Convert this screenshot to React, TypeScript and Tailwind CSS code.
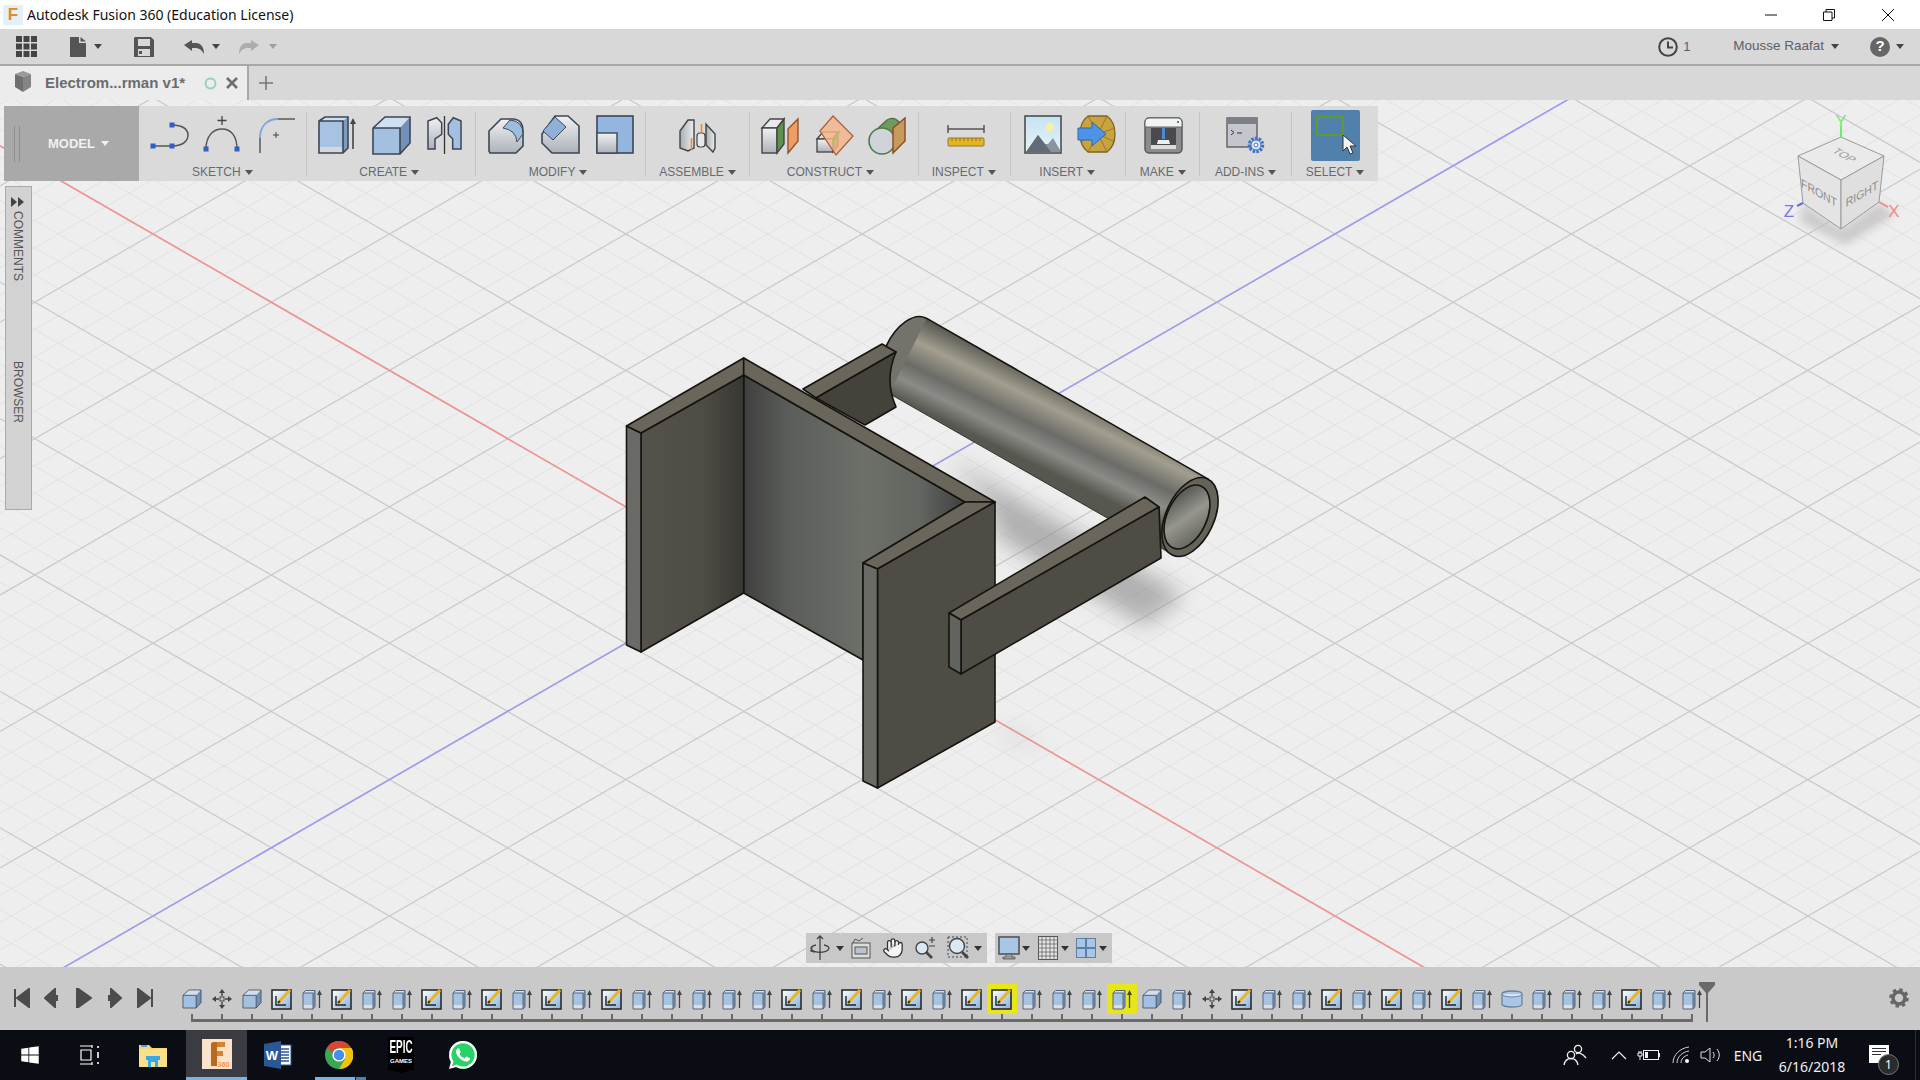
import React from 'react';
import { Hand } from 'lucide-react';
import { FaWindows, FaWhatsapp } from 'react-icons/fa';

// --- small helpers ---
const Caret = ({ color = '#555' }: { color?: string }) => (
  <svg width="8" height="5" viewBox="0 0 8 5" className="shrink-0">
    <polygon points="0,0 8,0 4,5" fill={color} />
  </svg>
);

const Ic = ({ children }: { children: React.ReactNode }) => (
  <svg width="48" height="44" viewBox="0 0 48 44" className="shrink-0">
    {children}
  </svg>
);

const Node = ({ x, y }: { x: number; y: number }) => <rect x={x - 2.5} y={y - 2.5} width="5" height="5" fill="#2f5fc8" />;

const edge = '#3d4654';

// --- ribbon icons ---
const LineIcon = () => (
  <Ic>
    <path d="M9 32H28C40 32 44 26 44 21C44 15 38 11 28 11" fill="none" stroke="#555" strokeWidth="1.5" />
    <Node x={9} y={32} />
    <Node x={28} y={32} />
    <Node x={28} y={11} />
  </Ic>
);
const ArcIcon = () => (
  <Ic>
    <path d="M8 35C8 22 15 15 24 15C33 15 39 22 39 35" fill="none" stroke="#555" strokeWidth="1.5" />
    <path d="M19.5 6.5H28.5M24 2V11" stroke="#444" strokeWidth="1.3" />
    <Node x={8} y={35} />
    <Node x={39} y={35} />
  </Ic>
);
const FilletIcon = () => (
  <Ic>
    <path d="M8 39V24" stroke="#444" strokeWidth="1.3" />
    <path d="M8 24C8 12 15 5 26 5" fill="none" stroke="#7ba6e0" strokeWidth="1.8" />
    <path d="M26 5H43" stroke="#444" strokeWidth="1.3" />
    <path d="M21 21H27M24 18V24" stroke="#444" strokeWidth="1" />
  </Ic>
);
const ExtrudeIcon = () => (
  <Ic>
    <polygon points="6,7 12,3 35,3 30,7" fill="#cfe0f0" />
    <rect x="6" y="7" width="24" height="26" fill="#a7c3e2" />
    <rect x="6" y="33" width="24" height="6" fill="#d5d7da" />
    <polygon points="30,7 35,3 35,34 30,39" fill="#7f9bc0" />
    <path d="M6 7L12 3H35V34L30 39H6Z M6 7H30V39" fill="none" stroke={edge} strokeWidth="1.6" />
    <path d="M40 35V9" stroke="#444" strokeWidth="1.6" />
    <polygon points="40,4 37,10 43,10" fill="#444" />
  </Ic>
);
const BoxFaces = () => (
  <>
    <polygon points="6,14 18,3 43,3 33,14" fill="#cfe0f0" />
    <rect x="6" y="14" width="27" height="26" fill="#a3c0e0" />
    <polygon points="33,14 43,3 43,29 33,40" fill="#7391b8" />
    <path d="M6 14L18 3H43V29L33 40H6Z M6 14H33V40" fill="none" stroke={edge} strokeWidth="1.6" />
  </>
);
const MirrorIcon = () => (
  <Ic>
    <polygon points="7,7 15.7,3.7 20.7,8.7 20.7,20.3 14,25 14,35 7,35" fill="url(#gray-v)" stroke={edge} strokeWidth="1.5" />
    <polygon points="40,7 32.3,3.7 27.3,10.3 27.3,20.3 31.7,25 31.7,35 40,35" fill="#a3c0e0" stroke={edge} strokeWidth="1.5" />
    <path d="M23.5 2V40" stroke="#333" strokeWidth="1.3" />
  </Ic>
);
const PressPullIcon = () => (
  <Ic>
    <path d="M7 17L19 5H32Q41 6 41 17V32L34 39H8L7 37Z" fill="url(#gray-v)" stroke={edge} strokeWidth="1.6" />
    <path d="M21 14L28 6Q41 7 41 20L35 28Q34 16 21 14Z" fill="#9dbde0" stroke={edge} strokeWidth="1" />
  </Ic>
);
const ChamferIcon = () => (
  <Ic>
    <polygon points="6,20 19,2 32,2 43,12 43,39 16,39 6,29" fill="url(#gray-v)" stroke={edge} strokeWidth="1.6" />
    <polygon points="7,17 19,3 30,13 17,26" fill="#8fb0d8" stroke={edge} strokeWidth="1" />
  </Ic>
);
const ShellIcon = () => (
  <Ic>
    <rect x="7" y="2" width="36" height="37" fill="#94b6de" stroke={edge} strokeWidth="1.6" />
    <rect x="7" y="19" width="20" height="20" fill="url(#gray-v)" stroke={edge} strokeWidth="1.4" />
  </Ic>
);
const AssembleIcon = () => (
  <Ic>
    <polygon points="7,17 15,6 21,6 21,34 15,37 7,34" fill="url(#gray-h)" stroke="#444" strokeWidth="1.4" />
    <polygon points="42,20 33,10 33,31 40,38 42,34" fill="url(#gray-h)" stroke="#444" strokeWidth="1.4" />
    <rect x="24" y="19" width="8" height="14" rx="3" fill="#e8e8e8" stroke="#444" strokeWidth="1.2" />
    <path d="M18.5 24V36M28.5 10V20" stroke="#f08a20" strokeWidth="1.6" />
  </Ic>
);
const PlaneBoxIcon = () => (
  <Ic>
    <polygon points="6,14 14,5 28,5 21,14" fill="#e8e9ea" stroke="#444" strokeWidth="1.4" />
    <rect x="6" y="14" width="15" height="25" fill="url(#gray-v)" stroke="#444" strokeWidth="1.4" />
    <polygon points="21,14 28,5 28,30 21,39" fill="#5d9150" stroke="#444" strokeWidth="1.4" />
    <polygon points="32,15 42,5 42,27 32,39" fill="#ee9d66" stroke="#95532a" strokeWidth="1.4" />
  </Ic>
);
const PlaneAngleIcon = () => (
  <Ic>
    <polygon points="7,25 13,18 28,18 23,25" fill="#e5e6e8" stroke="#444" strokeWidth="1.3" />
    <rect x="7" y="25" width="16" height="13" fill="url(#gray-v)" stroke="#444" strokeWidth="1.3" />
    <polygon points="23,25 28,18 28,32 23,38" fill="#5d9150" stroke="#444" strokeWidth="1.3" />
    <polygon points="23,2 43,22 26,41 10,17" fill="#f5b48d" fillOpacity="0.85" stroke="#a8623a" strokeWidth="1.3" />
    <path d="M22 30L30 17" stroke="#9ad24f" strokeWidth="1.4" />
  </Ic>
);
const PlaneCylIcon = () => (
  <Ic>
    <path d="M9 19L23 6Q30 2 35 8L29 30L24 36Z" fill="#6d9c5c" stroke="#4a6f48" strokeWidth="1.4" />
    <circle cx="18" cy="27" r="13" fill="#d0d3d8" stroke="#4f7b4f" strokeWidth="1.6" />
    <polygon points="29,14 41,4 41,27 29,39" fill="#c79a5a" stroke="#8a4a25" strokeWidth="1.4" />
  </Ic>
);
const RulerIcon = () => (
  <Ic>
    <path d="M7 15H43M7 11V19M43 11V19" stroke="#555" strokeWidth="1.5" fill="none" />
    <rect x="7" y="24" width="36" height="8" rx="1" fill="#e6b422" stroke="#8a7a3a" strokeWidth="1" />
    <path d="M11 24v3M15 24v3M19 24v3M23 24v3M27 24v3M31 24v3M35 24v3M39 24v3" stroke="#8a6a10" strokeWidth="0.8" />
  </Ic>
);
const PictureIcon = () => (
  <Ic>
    <rect x="8" y="2" width="36" height="37" fill="url(#sky)" stroke="#444" strokeWidth="1.5" />
    <circle cx="33" cy="13" r="4" fill="#fbeea2" />
    <polygon points="21,21 9,38 43,38 43,36 36,24 31,30 28,30" fill="#8a929e" />
    <polygon points="21,21 9,38 34,38" fill="#626a77" />
  </Ic>
);
const InsertIcon = () => (
  <Ic>
    <path d="M16 2H35Q43 8 43 20Q43 32 35 38H16Q8 32 8 20Q8 8 16 2Z" fill="#c9a341" stroke="#7c6420" strokeWidth="1.3" />
    <path d="M16 2L26 20L35 2M8 14L26 20L43 14M8 28L26 20L43 28M16 38L26 20L35 38" fill="none" stroke="#8f7426" strokeWidth="0.9" />
    <polygon points="6,14 20,14 20,8 34,20 20,32 20,26 6,26" fill="#4d94e6" stroke="#2d68b0" strokeWidth="1" />
  </Ic>
);
const PrinterIcon = () => (
  <Ic>
    <rect x="6" y="4" width="37" height="35" rx="4" fill="#8c8c8e" stroke="#555" strokeWidth="1.4" />
    <path d="M6 13V8Q6 4 10 4H39Q43 4 43 8V13Z" fill="#f4f4f4" stroke="#666" strokeWidth="1" />
    <rect x="38" y="7" width="2" height="2" fill="#2aa84a" />
    <rect x="12" y="14" width="25" height="21" fill="#4a4a4c" />
    <rect x="23" y="14" width="3" height="11" fill="#4b8bd6" />
    <polygon points="19,26 30,26 31,30 18,30" fill="#eee" />
    <rect x="12" y="31" width="25" height="4" fill="#dcdcdc" />
  </Ic>
);
const AddInsIcon = () => (
  <Ic>
    <rect x="5" y="4" width="30" height="29" fill="#c3c6cc" stroke="#555" strokeWidth="1.3" />
    <rect x="5" y="4" width="30" height="6" fill="#7d7f84" />
    <path d="M9 16L12 18.5L9 21M15 19H20" stroke="#333" strokeWidth="1" fill="none" />
    <circle cx="34" cy="31" r="6.5" fill="none" stroke="#3f72c4" strokeWidth="3.6" strokeDasharray="2.4 1.2" />
    <circle cx="34" cy="31" r="5" fill="#dfe8f5" stroke="#3f72c4" strokeWidth="1" />
    <circle cx="34" cy="31" r="2" fill="#fff" stroke="#3f72c4" strokeWidth="1" />
  </Ic>
);

// --- ribbon data ---
const groups = [
  { label: 'SKETCH', width: 'w-[167px]', gap: 'gap-[6px]', shift: '', icons: [<LineIcon key="a" />, <ArcIcon key="b" />, <FilletIcon key="c" />] },
  {
    label: 'CREATE',
    width: 'w-[168px]',
    gap: 'gap-[6px]',
    shift: 'mr-[3px]',
    icons: [
      <ExtrudeIcon key="a" />,
      <Ic key="b"><BoxFaces /></Ic>,
      <MirrorIcon key="c" />,
    ],
  },
  { label: 'MODIFY', width: 'w-[169px]', gap: 'gap-[6px]', shift: 'mr-[4px]', icons: [<PressPullIcon key="a" />, <ChamferIcon key="b" />, <ShellIcon key="c" />] },
  { label: 'ASSEMBLE', width: 'w-[104px]', gap: 'gap-0', shift: '', icons: [<AssembleIcon key="a" />] },
  { label: 'CONSTRUCT', width: 'w-[168px]', gap: 'gap-[6px]', shift: 'mr-[8px]', icons: [<PlaneBoxIcon key="a" />, <PlaneAngleIcon key="b" />, <PlaneCylIcon key="c" />] },
  { label: 'INSPECT', width: 'w-[91px]', gap: 'gap-0', shift: 'mr-[2px]', icons: [<RulerIcon key="a" />] },
  { label: 'INSERT', width: 'w-[114px]', gap: 'gap-[7px]', shift: 'mr-[2px]', icons: [<PictureIcon key="a" />, <InsertIcon key="b" />] },
  { label: 'MAKE', width: 'w-[73px]', gap: 'gap-0', shift: '', icons: [<PrinterIcon key="a" />] },
  { label: 'ADD-INS', width: 'w-[91px]', gap: 'gap-0', shift: '', icons: [<AddInsIcon key="a" />] },
];

const RibbonGroup = ({ label, width, gap, shift, children }: { label: string; width: string; gap: string; shift: string; children: React.ReactNode }) => (
  <div className={`flex flex-col items-center pt-2 ${width}`}>
    <div className={`flex justify-center h-[44px] ${gap}`}>{children}</div>
    <div className={`flex items-center gap-[4px] mt-[7px] h-[14px] text-[12px] leading-none text-[#666a70] ${shift}`}>
      {label}
      <Caret />
    </div>
  </div>
);

const Sep = () => <div className="w-px h-[64px] self-center bg-[#c4c4c4] shrink-0" />;

// --- timeline ---
type Step = 'box' | 'move' | 'sketch' | 'ext' | 'cyl';

const steps: Step[] = [
  'box', 'move', 'box', 'sketch', 'ext', 'sketch', 'ext', 'ext', 'sketch', 'ext',
  'sketch', 'ext', 'sketch', 'ext', 'sketch', 'ext', 'ext', 'ext', 'ext', 'ext',
  'sketch', 'ext', 'sketch', 'ext', 'sketch', 'ext', 'sketch', 'sketch', 'ext', 'ext',
  'ext', 'ext', 'box', 'ext', 'move', 'sketch', 'ext', 'ext', 'sketch', 'ext',
  'sketch', 'ext', 'sketch', 'ext', 'cyl', 'ext', 'ext', 'ext', 'sketch', 'ext', 'ext',
];
const highlighted = [27, 31];

const StepIcon = ({ type }: { type: Step }) => {
  if (type === 'sketch')
    return (
      <svg width="22" height="22" viewBox="0 0 22 22">
        <rect x="1" y="2" width="19" height="19" fill="url(#sketch-bg)" stroke="#2b2b2b" strokeWidth="1.6" />
        <path d="M5 8V17H15" fill="none" stroke="#222" strokeWidth="1.4" />
        <path d="M7 15L19 2" stroke="#e9b61e" strokeWidth="3" />
        <path d="M7 15L9 13" stroke="#333" strokeWidth="2" />
      </svg>
    );
  if (type === 'move')
    return (
      <svg width="24" height="24" viewBox="0 0 24 24" fill="#444">
        <polygon points="12,2 9,6 15,6" />
        <polygon points="12,22 9,18 15,18" />
        <polygon points="2,12 6,9 6,15" />
        <polygon points="22,12 18,9 18,15" />
        <path d="M12 6V9M12 15V18M6 12H9M15 12H18" stroke="#444" strokeWidth="1.4" />
        <rect x="10" y="10" width="4" height="4" fill="none" stroke="#444" strokeWidth="1" />
      </svg>
    );
  if (type === 'cyl')
    return (
      <svg width="24" height="24" viewBox="0 0 24 24">
        <path d="M2 7C2 3 22 3 22 7V17C22 21 2 21 2 17Z" fill="#a9c6e6" stroke="#6d83a0" strokeWidth="1.3" />
        <path d="M2 7C2 11 22 11 22 7" fill="#d3e3f3" stroke="#6d83a0" strokeWidth="1" />
      </svg>
    );
  if (type === 'box')
    return (
      <svg width="22" height="20" viewBox="4 1 41 41">
        <BoxFaces />
      </svg>
    );
  return (
    <svg width="21" height="21" viewBox="0 0 21 21">
      <polygon points="1,4 3.5,1.5 13,1.5 11,4" fill="#cfe0f0" />
      <rect x="1" y="4" width="10" height="12" fill="#a7c3e2" />
      <rect x="1" y="16" width="10" height="4" fill="#dcdee0" />
      <polygon points="11,4 13,1.5 13,17.5 11,20" fill="#7f9bc0" />
      <path d="M1 4L3.5 1.5H13V17.5L11 20H1Z M1 4H11V20" fill="none" stroke="#56667c" strokeWidth="1" />
      <path d="M17.5 19V5" stroke="#444" strokeWidth="1.3" />
      <polygon points="17.5,1 15,6 20,6" fill="#444" />
    </svg>
  );
};

const playControls = [
  'M2 1V19M4 10L16 1V19Z',
  'M1 10L11 1V19ZM13 7V13',
  'M2 0L16 10L2 20Z',
  'M15 10L5 1V19ZM3 7V13',
  'M15 1V19M13 10L1 1V19Z',
];

// --- viewport scene ---
const O = { x: 744, y: 575 };
const k30 = 0.577;

const Grid = () => {
  const minor: React.ReactNode[] = [];
  const major: React.ReactNode[] = [];
  for (let i = -70; i <= 70; i++) {
    const isMajor = i % 5 === 0;
    const color = isMajor ? '#cbcbcb' : '#e2e2e2';
    const off = i * 27.28;
    const a = O.y - k30 * O.x + off;
    const b = O.y + k30 * (1920 - O.x) + off;
    const c = O.y + k30 * O.x + off;
    const d = O.y - k30 * (1920 - O.x) + off;
    const target = isMajor ? major : minor;
    target.push(<line key={`d${i}`} x1="0" y1={a} x2="1920" y2={b} stroke={color} strokeWidth={isMajor ? 1.3 : 1} />);
    target.push(<line key={`r${i}`} x1="0" y1={c} x2="1920" y2={d} stroke={color} strokeWidth={isMajor ? 1.3 : 1} />);
  }
  return (
    <g>
      {minor}
      {major}
    </g>
  );
};

const ink = { stroke: '#15140f', strokeWidth: 1.6, strokeLinejoin: 'round' as const };

const Model = () => (
  <g>
    {/* shadow */}
    <polygon points="948,458 1185,595 1145,626 1000,540 985,500" fill="#8a8a8a" opacity="0.62" filter="url(#soft)" />
    <polygon points="995,722 1050,752 1010,742" fill="#999" opacity="0.35" filter="url(#soft)" />

    {/* cylinder */}
    <ellipse cx="908" cy="356" rx="24" ry="42" transform="rotate(25 908 356)" fill="#74726a" {...ink} />
    <polygon points="926.7,318.4 1208.7,479.4 1171.3,554.6 889.3,393.6" fill="url(#tube)" />
    <path d="M926.7 318.4L1208.7 479.4" fill="none" {...ink} />
    <path d="M889.3 393.6L1110 519.5" fill="none" stroke="#33332e" strokeWidth="1" />

    {/* rear arm */}
    <polygon points="803,389 882,344 896,352 816,398" fill="#6a665c" {...ink} />
    <path d="M816 398L896 352Q884 380 896 407L865 425Z" fill="#45423c" {...ink} />

    {/* tube end */}
    <ellipse cx="1190" cy="517" rx="24" ry="42" transform="rotate(25 1190 517)" fill="#66635a" {...ink} />
    <ellipse cx="1187" cy="517" rx="19.7" ry="34" transform="rotate(25 1187 517)" fill="url(#bore)" {...ink} />

    {/* back wall */}
    <polygon points="743.7,375 965,502 863,563 863,660 743.7,593" fill="url(#wall)" {...ink} />
    {/* left wall */}
    <polygon points="641,433 743.7,375 743.7,593 641,652" fill="url(#left)" {...ink} />
    <polygon points="626.5,426 641,433 641,652 626.5,645" fill="#6a6b66" {...ink} />
    <polygon points="626.5,426 743.7,358 743.7,375 641,433" fill="#6a665c" {...ink} />
    <polygon points="743.7,358 995,502 965,502 743.7,375" fill="#6a665c" {...ink} />
    {/* right wall */}
    <polygon points="995,502 965,502 863,563 877.5,569" fill="#6a665c" {...ink} />
    <polygon points="877.5,569 995,502 995,722 877.5,788" fill="#4f4c45" {...ink} />
    <polygon points="863,563 877.5,569 877.5,788 863,781" fill="#6a6b66" {...ink} />

    {/* front arm */}
    <polygon points="949,613 1145,497 1159,507 961,620" fill="#6a665c" {...ink} />
    <polygon points="961,620 1159,507 1161,558 961,674" fill="#4f4c45" {...ink} />
    <polygon points="949,613 961,620 961,674 949,667" fill="#62635f" {...ink} />
  </g>
);

const ViewCube = () => (
  <g>
    <polygon points="1803,203 1841,229 1879,202 1895,215 1845,245 1800,222" fill="#bdbdbd" opacity="0.7" filter="url(#soft-sm)" />
    <polygon points="1841,137 1884,156 1841,180 1798,156" fill="#eaeaea" stroke="#9a9a9a" />
    <polygon points="1798,156 1841,180 1841,229 1803,203" fill="#e4e4e4" stroke="#9a9a9a" />
    <polygon points="1884,156 1841,180 1841,229 1879,202" fill="#dfdfdf" stroke="#9a9a9a" />
    <text transform="matrix(.8 .46 -.8 .46 1841 157)" textAnchor="middle" fontSize="12" fill="#999" fontFamily="Liberation Sans">TOP</text>
    <text transform="matrix(.87 .5 0 1 1819 197)" textAnchor="middle" fontSize="12" fill="#8d8d8d" fontFamily="Liberation Sans">FRONT</text>
    <text transform="matrix(.87 -.5 0 1 1862 198)" textAnchor="middle" fontSize="12" fill="#8d8d8d" fontFamily="Liberation Sans">RIGHT</text>
    <path d="M1841 137V126" stroke="#77e677" strokeWidth="2" />
    <path d="M1803 203L1797 206" stroke="#6a6ae8" strokeWidth="2" />
    <path d="M1879 202L1888 207" stroke="#f08a8a" strokeWidth="2" />
    <text x="1841" y="127" textAnchor="middle" fontSize="17" fill="#77e677" fontFamily="Liberation Sans">Y</text>
    <text x="1789" y="217" textAnchor="middle" fontSize="17" fill="#7777ee" fontFamily="Liberation Sans">Z</text>
    <text x="1894" y="217" textAnchor="middle" fontSize="17" fill="#f08a8a" fontFamily="Liberation Sans">X</text>
  </g>
);

const Scene = () => (
  <svg className="absolute inset-0 w-full h-full" viewBox="0 100 1920 867" preserveAspectRatio="none">
    <defs>
      <filter id="soft" x="-30%" y="-30%" width="160%" height="160%">
        <feGaussianBlur stdDeviation="11" />
      </filter>
      <filter id="soft-sm" x="-30%" y="-30%" width="160%" height="160%">
        <feGaussianBlur stdDeviation="4" />
      </filter>
      <linearGradient id="tube" gradientUnits="userSpaceOnUse" x1="926" y1="318" x2="889" y2="394">
        <stop offset="0" stopColor="#56564f" />
        <stop offset="0.3" stopColor="#a39e8f" />
        <stop offset="0.58" stopColor="#6b6c67" />
        <stop offset="0.78" stopColor="#8b8c87" />
        <stop offset="1" stopColor="#56574f" />
      </linearGradient>
      <linearGradient id="bore" x1="0" y1="0" x2="1" y2="1">
        <stop offset="0" stopColor="#3f3f3b" />
        <stop offset="0.5" stopColor="#96968f" />
        <stop offset="1" stopColor="#55564f" />
      </linearGradient>
      <linearGradient id="wall" gradientUnits="userSpaceOnUse" x1="744" y1="0" x2="965" y2="0">
        <stop offset="0" stopColor="#3f403f" />
        <stop offset="0.2" stopColor="#5b5d5a" />
        <stop offset="0.55" stopColor="#6d6f69" />
        <stop offset="0.8" stopColor="#62645f" />
        <stop offset="1" stopColor="#3f4042" />
      </linearGradient>
      <linearGradient id="left" x1="0" y1="0" x2="1" y2="0">
        <stop offset="0" stopColor="#55524a" />
        <stop offset="0.6" stopColor="#4f4c45" />
        <stop offset="1" stopColor="#383632" />
      </linearGradient>
    </defs>
    <rect x="0" y="100" width="1920" height="867" fill="#eeeeee" />
    <Grid />
    <line x1="0" y1={O.y - k30 * O.x} x2="1920" y2={O.y + k30 * (1920 - O.x)} stroke="#f29393" strokeWidth="1.6" />
    <line x1="0" y1={O.y + k30 * O.x} x2="1920" y2={O.y - k30 * (1920 - O.x)} stroke="#9c9cf0" strokeWidth="1.6" />
    <Model />
    <ViewCube />
  </svg>
);

// --- taskbar icons ---
const FusionIcon = () => (
  <div className="relative w-[30px] h-[30px] bg-[#fbe3cb] flex items-center justify-center">
    <svg width="18" height="24" viewBox="0 0 18 24">
      <path d="M3 24V3Q3 0 6 0H17V5H9V9H15V14H9V24Z" fill="#d9822b" />
      <path d="M3 24V3Q3 0 6 0H9V24Z" fill="#b96a1d" />
    </svg>
    <span className="absolute right-[2px] bottom-[1px] text-[7px] leading-none font-bold text-[#ef9a52]">360</span>
  </div>
);
const WordIcon = () => (
  <svg width="28" height="28" viewBox="0 0 28 28">
    <rect x="13" y="4" width="14" height="20" fill="#fff" stroke="#2b5797" />
    <path d="M16 8H25M16 11H25M16 14H25M16 17H25M16 20H25" stroke="#2b5797" strokeWidth="1.4" />
    <polygon points="0,3 17,0 17,28 0,25" fill="#2b5797" />
    <text x="8" y="18.5" textAnchor="middle" fontSize="13" fontWeight="700" fill="#fff" fontFamily="Liberation Sans">W</text>
  </svg>
);
const ChromeIcon = () => (
  <svg width="28" height="28" viewBox="0 0 28 28">
    <circle cx="14" cy="14" r="14" fill="#3aa757" />
    <path d="M14 0A14 14 0 0 1 26 7L14 7L14 7A7 7 0 0 0 7.5 11.5L2.2 6.5A14 14 0 0 1 14 0Z" fill="#db4437" />
    <path d="M14 7H26.5A14 14 0 0 1 14 28L20 18Z" fill="#f4c20d" />
    <circle cx="14" cy="14" r="6.6" fill="#fff" />
    <circle cx="14" cy="14" r="5.2" fill="#4a8af4" />
  </svg>
);
const FolderIcon = () => (
  <svg width="28" height="24" viewBox="0 0 28 24">
    <path d="M0 2H10L13 5H28V24H0Z" fill="#f7d774" />
    <rect x="0" y="6" width="28" height="18" fill="#fbe08a" />
    <rect x="2" y="2" width="6" height="2" fill="#3fa6e0" />
    <path d="M9 24V16H19V24H16V19H12V24Z" fill="#37a9e6" />
    <rect x="7" y="13" width="14" height="4" fill="#37a9e6" />
  </svg>
);
const TaskView = () => (
  <svg width="20" height="20" viewBox="0 0 20 20" fill="none" stroke="#fff" strokeWidth="1.2">
    <path d="M0 1H12M0 19H12M1 5H11V15H1ZM12 0V3M12 17V20" />
    <path d="M18 1V3M18 7V13M18 17V19" strokeWidth="1.6" />
  </svg>
);

// --- main ---
const App: React.FC = () => {
  return (
    <div className="flex flex-col w-screen h-screen overflow-hidden font-['Liberation_Sans',sans-serif]">
      <svg className="absolute w-0 h-0">
        <defs>
          <linearGradient id="gray-v" x1="0" y1="0" x2="0" y2="1">
            <stop offset="0" stopColor="#f0f1f3" />
            <stop offset="1" stopColor="#adb2ba" />
          </linearGradient>
          <linearGradient id="gray-h" x1="0" y1="0" x2="1" y2="0">
            <stop offset="0" stopColor="#a9adb3" />
            <stop offset="1" stopColor="#eceef0" />
          </linearGradient>
          <linearGradient id="sky" x1="0" y1="0" x2="0" y2="1">
            <stop offset="0" stopColor="#c5e3f3" />
            <stop offset="1" stopColor="#e8f2f6" />
          </linearGradient>
          <linearGradient id="sketch-bg" x1="0" y1="0" x2="1" y2="1">
            <stop offset="0" stopColor="#ffffff" />
            <stop offset="1" stopColor="#86b0dc" />
          </linearGradient>
        </defs>
      </svg>

      {/* Title bar */}
      <div className="flex items-center h-[29px] shrink-0 bg-white pl-[3px]">
        <div className="flex items-center justify-center w-[20px] h-[20px] bg-[#e4f0f7]">
          <span className="text-[17px] leading-none font-bold text-[#e08a2e]">F</span>
        </div>
        <span className="ml-[4px] text-[14px] text-[#111] font-['Noto_Sans',sans-serif]">Autodesk Fusion 360 (Education License)</span>
        <div className="flex items-center ml-auto">
          <svg width="12" height="12" viewBox="0 0 12 12" className="mr-[46px]">
            <path d="M0 6H12" stroke="#111" />
          </svg>
          <svg width="12" height="12" viewBox="0 0 12 12" fill="none" stroke="#111" className="mr-[47px]">
            <path d="M0.5 3H9V11.5H0.5ZM3 3V0.5H11.5V9H9" />
          </svg>
          <svg width="12" height="12" viewBox="0 0 12 12" className="mr-[26px]">
            <path d="M0 0L12 12M12 0L0 12" stroke="#111" />
          </svg>
        </div>
      </div>

      {/* Quick access bar */}
      <div className="flex items-center h-[37px] shrink-0 bg-[#d8d8d8] border-b-2 border-[#a8a8a8] pl-[16px] pr-[16px]">
        <svg width="21" height="21" viewBox="0 0 21 21" fill="#444">
          <path d="M0 0h6v6H0zM7.5 0h6v6h-6zM15 0h6v6h-6zM0 7.5h6v6H0zM7.5 7.5h6v6h-6zM15 7.5h6v6h-6zM0 15h6v6H0zM7.5 15h6v6h-6zM15 15h6v6h-6z" />
        </svg>
        <svg width="16" height="20" viewBox="0 0 16 20" fill="#555" className="ml-[33px]">
          <path d="M0 0H9V6H16V20H0ZM10.5 0L16 4.5H10.5Z" />
        </svg>
        <div className="ml-[8px]"><Caret color="#444" /></div>
        <svg width="20" height="20" viewBox="0 0 20 20" className="ml-[32px]">
          <path d="M1 0H17L20 3V20H0V1Z" fill="#555" />
          <rect x="4" y="2" width="12" height="7" fill="#d8d8d8" />
          <rect x="4" y="12" width="12" height="7" fill="#d8d8d8" />
          <rect x="5" y="14" width="3" height="3" fill="#555" />
        </svg>
        <svg width="20" height="14" viewBox="0 0 20 14" fill="#555" className="ml-[30px]">
          <path d="M0 5L8 0V3H12C17 3 20 7 20 14C18 10 15 8 12 8H8V11Z" />
        </svg>
        <div className="ml-[8px]"><Caret color="#444" /></div>
        <svg width="20" height="14" viewBox="0 0 20 14" fill="#adadad" className="ml-[19px]">
          <path d="M20 5L12 0V3H8C3 3 0 7 0 14C2 10 5 8 8 8H12V11Z" />
        </svg>
        <div className="ml-[10px]"><Caret color="#a0a0a0" /></div>

        <div className="flex items-center ml-auto text-[#5e6068]">
          <svg width="20" height="20" viewBox="0 0 20 20" fill="none" stroke="#444" strokeWidth="2">
            <circle cx="10" cy="10" r="8.8" />
            <path d="M10 4.5V10.5H15" />
          </svg>
          <span className="ml-[5px] w-[7px] text-[13px]">1</span>
          <span className="ml-[43px] text-[13.5px]">Mousse Raafat</span>
          <div className="ml-[7px]"><Caret color="#444" /></div>
          <div className="flex items-center justify-center ml-[31px] w-[20px] h-[20px] rounded-full bg-[#666] text-white text-[15px] font-bold">?</div>
          <div className="ml-[6px]"><Caret color="#444" /></div>
        </div>
      </div>

      {/* Tab row */}
      <div className="flex items-center h-[34px] shrink-0 bg-[#d8d8d8]">
        <div className="flex items-center w-[249px] h-full bg-[#ececec] border-r-2 border-[#a8a8a8] pl-[13px]">
          <svg width="20" height="22" viewBox="0 0 20 22" className="shrink-0 mb-[3px]">
            <polygon points="2,3 10,0 18,3 10,6" fill="#9a9a9a" />
            <polygon points="2,3 10,6 10,21 2,16" fill="#6f6f6f" />
            <polygon points="18,3 10,6 10,21 18,16" fill="#858585" />
          </svg>
          <span className="ml-[12px] w-[157px] text-[15px] font-bold text-[#6c6c6c] whitespace-nowrap">Electrom...rman v1*</span>
          <svg width="13" height="13" viewBox="0 0 13 13" fill="none" stroke="#8ed0c2" strokeWidth="1.8" className="ml-[2px]">
            <circle cx="6.5" cy="6.5" r="5" />
          </svg>
          <svg width="12" height="12" viewBox="0 0 12 12" stroke="#6f6f6f" strokeWidth="2.6" className="ml-[9px]">
            <path d="M1 1L11 11M11 1L1 11" />
          </svg>
        </div>
        <svg width="14" height="14" viewBox="0 0 14 14" stroke="#777" strokeWidth="1.6" className="ml-[10px]">
          <path d="M7 0V14M0 7H14" />
        </svg>
      </div>

      {/* Viewport */}
      <div className="relative flex-1 min-h-0 overflow-hidden">
        <Scene />

        {/* Ribbon */}
        <div className="absolute left-[4px] top-[6px] flex w-[1374px] h-[75px] bg-[#dadada]">
          <div className="flex items-center w-[135px] h-full bg-[#a9a9a9] pl-[10px]">
            <div className="w-[6px] h-[36px] border-x border-[#8f8f8f]" />
            <span className="ml-[28px] text-[13px] font-bold text-[#f1f1f1]">MODEL</span>
            <div className="ml-[6px]"><Caret color="#f1f1f1" /></div>
          </div>
          {groups.map((g) => (
            <React.Fragment key={g.label}>
              <RibbonGroup label={g.label} width={g.width} gap={g.gap} shift={g.shift}>
                {g.icons}
              </RibbonGroup>
              <Sep />
            </React.Fragment>
          ))}
          <div className="flex flex-col items-center w-[86px]">
            <div className="relative mt-[4px] w-[49px] h-[51px] rounded-[2px] bg-[#5080ac]">
              <div className="absolute left-[5px] top-[6px] w-[28px] h-[20px] border-2 border-[#5e9a2c]" />
              <svg width="16" height="20" viewBox="0 0 16 20" className="absolute left-[31px] top-[25px]">
                <path d="M1 0V16L5 12L8 19L11 18L8 11H14Z" fill="#f4f4f4" stroke="#333" />
              </svg>
            </div>
            <div className="flex items-center gap-[4px] mt-[4px] h-[14px] text-[12px] leading-none text-[#666a70]">
              SELECT
              <Caret />
            </div>
          </div>
        </div>

        {/* Side panel */}
        <div className="absolute left-[5px] top-[86px] flex flex-col items-center w-[27px] h-[324px] bg-[#d2d2d2] border border-[#aaa] text-[12px] leading-none text-[#555] pr-[2px]">
          <svg width="14" height="10" viewBox="0 0 14 10" fill="#444" className="mt-[10px]">
            <path d="M0 0L6 5L0 10ZM7 0L13 5L7 10Z" />
          </svg>
          <span className="mt-[4px] [writing-mode:vertical-rl]">COMMENTS</span>
          <span className="mt-[80px] [writing-mode:vertical-rl]">BROWSER</span>
        </div>

        {/* Navigation bar */}
        <div className="absolute left-[806px] top-[833px] flex gap-[8px] h-[30px]">
          <div className="flex items-center w-[181px] bg-[#c8c8c8] pl-[2px]">
            <svg width="24" height="26" viewBox="0 0 24 26" fill="none" stroke="#444" strokeWidth="1.3">
              <path d="M12 1V25M9 4L12 1L15 4" />
              <path d="M16 10C21 11 22 13 20 15C17 18 7 18 4 15C2 13 3 11 8 10" />
              <path d="M4 12L3 16L7 17" />
            </svg>
            <div className="ml-[4px]"><Caret color="#333" /></div>
            <svg width="22" height="22" viewBox="0 0 22 22" fill="none" stroke="#555" className="ml-[6px]">
              <rect x="2" y="6" width="18" height="15" fill="#dcdcdc" />
              <rect x="5" y="10" width="12" height="7" fill="#bcc3cc" />
              <path d="M3 6L5 2L9 4L13 1" />
            </svg>
            <div className="ml-[10px]"><Hand size={22} color="#333" fill="#f4f4f4" strokeWidth={1.4} /></div>
            <svg width="22" height="22" viewBox="0 0 22 22" fill="none" stroke="#444" className="ml-[10px]">
              <circle cx="8" cy="11" r="6" fill="#dbe8f3" strokeWidth="1.4" />
              <path d="M12 15L18 21" strokeWidth="2.6" />
              <path d="M15 3H21M18 0V6M15 9H21" strokeWidth="1.2" />
            </svg>
            <svg width="22" height="24" viewBox="0 0 22 24" fill="none" stroke="#444" className="ml-[11px]">
              <rect x="1" y="1" width="19" height="20" strokeDasharray="2 2" strokeWidth="1" />
              <circle cx="10" cy="10" r="7.5" fill="#dbe8f3" strokeWidth="1.4" />
              <path d="M15 16L21 22" strokeWidth="2.6" />
            </svg>
            <div className="ml-[5px]"><Caret color="#333" /></div>
          </div>
          <div className="flex items-center w-[117px] bg-[#c8c8c8] pl-[3px]">
            <svg width="22" height="24" viewBox="0 0 22 24">
              <rect x="1" y="1" width="20" height="17" fill="#a9c6e6" stroke="#555" strokeWidth="1.6" />
              <path d="M8 18H14V21H17V23H5V21H8Z" fill="#999" stroke="#555" strokeWidth="0.8" />
            </svg>
            <div className="ml-[2px]"><Caret color="#333" /></div>
            <svg width="20" height="24" viewBox="0 0 20 24" className="ml-[8px]">
              <rect x="0.5" y="0.5" width="19" height="23" fill="#e4e4e4" stroke="#555" />
              <path d="M4 0V24M8 0V24M12 0V24M16 0V24M0 4H20M0 8H20M0 12H20M0 16H20M0 20H20" stroke="#666" strokeWidth="0.8" />
            </svg>
            <div className="ml-[3px]"><Caret color="#333" /></div>
            <div className="grid grid-cols-2 gap-[2px] ml-[7px] w-[20px] h-[20px] bg-[#5d7ea8] p-[1px]">
              <div className="bg-[#a9c6e6]" />
              <div className="bg-[#a9c6e6]" />
              <div className="bg-[#a9c6e6]" />
              <div className="bg-[#a9c6e6]" />
            </div>
            <div className="ml-[3px]"><Caret color="#333" /></div>
          </div>
        </div>
      </div>

      {/* Timeline */}
      <div className="relative flex h-[63px] shrink-0 bg-[#c9c9c9]">
        <div className="flex items-center h-full w-[177px] pl-[6px] pb-[1px] shrink-0">
          {playControls.map((d) => (
            <div key={d} className="flex justify-center w-[31px]">
              <svg width="17" height="20" viewBox="0 0 17 20" fill="#4c4c4c" stroke="#4c4c4c" strokeWidth="0.5">
                <path d={d} strokeWidth="2" />
              </svg>
            </div>
          ))}
        </div>
        <div className="flex flex-col pt-[17px]">
          <div className="flex">
            {steps.map((s, i) => (
              <div key={i} className="flex flex-col items-center w-[30px]">
                <div className={`flex items-center justify-center w-[30px] h-[30px] ${highlighted.includes(i) ? 'bg-[#e6e61a]' : ''}`}>
                  <StepIcon type={s} />
                </div>
                <div className="w-[2px] h-[5px] bg-[#6a6a6a]" />
              </div>
            ))}
          </div>
          <div className="ml-[14px] w-[1502px] h-[3px] bg-[#6a6a6a]" />
        </div>
        {/* Playhead */}
        <svg width="16" height="40" viewBox="0 0 16 40" className="absolute left-[1699px] top-[15px]">
          <polygon points="0,0 16,0 16,3 9,11 7,11 0,3" fill="#6a6a6a" />
          <rect x="7" y="10" width="2" height="30" fill="#6a6a6a" />
        </svg>
        <svg width="20" height="20" viewBox="0 0 20 20" className="absolute left-[1889px] top-[21px]">
          <circle cx="10" cy="10" r="6" fill="none" stroke="#666" strokeWidth="3.6" />
          <circle cx="10" cy="10" r="8" fill="none" stroke="#666" strokeWidth="3.6" strokeDasharray="3.2 3.08" />
        </svg>
      </div>

      {/* Taskbar */}
      <div className="flex items-stretch h-[50px] shrink-0 bg-[#0a0d13] font-['Noto_Sans',sans-serif] text-[#f0f0f0]">
        <div className="flex items-center justify-center w-[60px]">
          <FaWindows size={20} color="#fff" />
        </div>
        <div className="flex items-center justify-center w-[60px]">
          <TaskView />
        </div>
        <div className="flex items-center justify-center w-[66px]">
          <FolderIcon />
        </div>
        <div className="flex items-center justify-center w-[61px] bg-[#3a3c42] border-b-[3px] border-[#74b4e8]">
          <FusionIcon />
        </div>
        <div className="flex items-center justify-center w-[61px]">
          <WordIcon />
        </div>
        <div className="relative flex items-center justify-center w-[62px]">
          <ChromeIcon />
          <div className="absolute bottom-0 left-[7px] w-[40px] h-[3px] bg-[#74b4e8]" />
          <div className="absolute bottom-0 left-[48px] w-[10px] h-[3px] bg-[#4a83b0]" />
        </div>
        <div className="flex items-center justify-center w-[62px]">
          <div className="flex flex-col items-center justify-start w-[26px] h-[36px] bg-black rounded-[2px] pt-[2px] [clip-path:polygon(0_0,100%_0,100%_90%,50%_100%,0_90%)]">
            <span className="text-[18px] leading-[17px] font-bold text-white font-['Liberation_Sans',sans-serif] scale-x-[0.55]">EPIC</span>
            <span className="mt-[2px] text-[6px] leading-none font-bold text-white font-['Liberation_Sans',sans-serif]">GAMES</span>
          </div>
        </div>
        <div className="flex items-center justify-center w-[62px]">
          <div className="flex items-center justify-center w-[28px] h-[28px] rounded-full bg-[#25d366]">
            <FaWhatsapp size={32} color="#fff" />
          </div>
        </div>

        {/* Tray */}
        <div className="flex items-center ml-auto">
          <svg width="24" height="24" viewBox="0 0 24 24" fill="none" stroke="#f0f0f0" strokeWidth="1.3">
            <circle cx="15" cy="6" r="3.6" />
            <circle cx="8" cy="12" r="3.6" />
            <path d="M1 22C2 17 5 15.5 8 15.5C11 15.5 14 17 15 22M13 11C15 9.5 19 9.5 23 15" />
          </svg>
          <svg width="16" height="10" viewBox="0 0 16 10" fill="none" stroke="#f0f0f0" strokeWidth="1.2" className="ml-[24px]">
            <path d="M1 9L8 2L15 9" />
          </svg>
          <svg width="24" height="14" viewBox="0 0 24 14" fill="none" stroke="#f0f0f0" className="ml-[10px]">
            <rect x="6.5" y="2.5" width="15" height="9" />
            <rect x="8" y="4" width="3" height="6" fill="#f0f0f0" stroke="none" />
            <path d="M22 5V9" strokeWidth="2" />
            <path d="M1 5H5V8H1ZM2 3V5M4 3V5M3 8V12" />
          </svg>
          <svg width="20" height="18" viewBox="0 0 20 18" fill="none" stroke="#cfcfcf" className="ml-[11px]">
            <path d="M1 17C1 9 8 2 17 1M5 17C5 11 10 6 17 5M9 17C9 13 12 10 16 9" />
            <circle cx="15" cy="15" r="2" fill="#fff" stroke="none" />
          </svg>
          <svg width="22" height="18" viewBox="0 0 22 18" fill="none" stroke="#e0e0e0" className="ml-[8px]">
            <path d="M1 6H5L10 2V16L5 12H1Z" />
            <path d="M13 6C14.5 8 14.5 10 13 12M17 3C20 7 20 11 17 15" />
          </svg>
          <span className="ml-[8px] w-[36px] text-center text-[14px]">ENG</span>
          <div className="flex flex-col items-center ml-[8px] w-[76px] text-[14px] leading-[24px]">
            <span>1:16 PM</span>
            <span>6/16/2018</span>
          </div>
          <div className="relative ml-[19px] w-[20px] h-[18px] bg-white mb-[2px] flex flex-col gap-[2px] p-[3px]">
            <div className="h-px bg-[#333]" />
            <div className="h-px bg-[#333]" />
            <div className="h-px bg-[#333] w-[9px]" />
            <div className="absolute left-[9px] top-[9px] flex items-center justify-center w-[21px] h-[21px] rounded-full bg-[#2b2b2b] border border-[#777] text-[12px] text-white">1</div>
          </div>
          <div className="ml-[26px] w-px h-full bg-[#2b2f36]" />
          <div className="w-[4px]" />
        </div>
      </div>
    </div>
  );
};

export default App;
